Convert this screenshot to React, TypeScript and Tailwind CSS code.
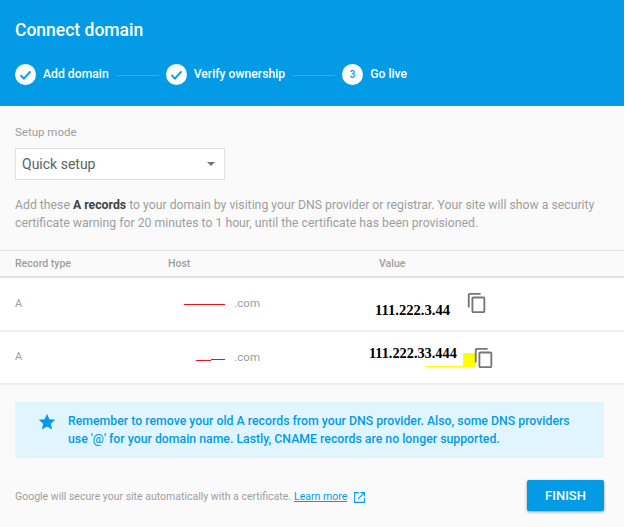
const font = "font-['Roboto',sans-serif]"

function CheckCircle() {
  return (
    <div className="w-[21px] h-[21px] rounded-full bg-white flex items-center justify-center shrink-0">
      <svg width="15" height="15" viewBox="0 0 24 24" fill="none" stroke="#039be5" strokeWidth="3">
        <path d="M4 13l5.5 5.5L20 7" />
      </svg>
    </div>
  )
}

function CopyIcon() {
  return (
    <svg width="22" height="22" viewBox="0 0 24 24" fill="#757575">
      <path d="M16 1H4c-1.1 0-2 .9-2 2v14h2V3h12V1zm3 4H8c-1.1 0-2 .9-2 2v14c0 1.100.9 2 2 2h11c1.100 0 2-.9 2-2V7c0-1.100-.9-2-2-2zm0 16H8V7h11v14z" />
    </svg>
  )
}

function Row({ redact, rowClass, children }: any) {
  return (
    <div className={`${rowClass} flex items-center border-b-2 border-[#eeeeee] text-[11px] text-[#9e9e9e]`}>
      <div className="w-[168px] pl-[15px] shrink-0">A</div>
      <div className="w-[195px] shrink-0 flex justify-end items-center pr-[103px] text-[11.5px]">
        {redact}
        <span className="ml-[9px]">.com</span>
      </div>
      {children}
    </div>
  )
}

export default function App() {
  return (
    <div className="w-[627px] h-[527px] overflow-hidden bg-white">
      <div className={`w-[624px] h-[527px] bg-[#fafafa] ${font}`}>
        {/* Header */}
        <div className="h-[106px] bg-[#039be5] text-white px-[15px] pt-[19px]">
          <h1 className="text-[17.5px] leading-[22px] font-medium">Connect domain</h1>
          <div className="flex items-center mt-[23px] text-[12.2px] font-medium">
            <CheckCircle />
            <span className="ml-[7px]">Add domain</span>
            <div className="w-[42px] h-px bg-white/20 ml-[8px] mr-[7px] mt-px" />
            <CheckCircle />
            <span className="ml-[7px]">Verify ownership</span>
            <div className="w-[42px] h-px bg-white/20 ml-[8px] mr-[7px] mt-px" />
            <div className="w-[21px] h-[21px] rounded-full bg-white text-[#039be5] flex items-center justify-center text-[10px] shrink-0">
              3
            </div>
            <span className="ml-[7px]">Go live</span>
          </div>
        </div>

        {/* Setup mode */}
        <div className="px-[15px] pt-[19px]">
          <div className="text-[11.5px] leading-[14px] text-[#9e9e9e]">Setup mode</div>
          <div className="mt-[9px] w-[210px] h-[32px] bg-white border border-[#e0e0e0] flex items-center justify-between pl-[6px] pr-[9px] text-[14px] text-[#616161]">
            <span>Quick setup</span>
            <div className="w-0 h-0 border-x-[4px] border-x-transparent border-t-[4px] border-t-[#757575]" />
          </div>
          <p className="mt-[16px] w-[594px] text-[12.25px] leading-[18px] text-[#9e9e9e]">
            Add these <b className="font-bold text-[#424242]">A records</b> to your domain by visiting your DNS provider or registrar. Your site will show a security certificate warning for 20 minutes to 1 hour, until the certificate has been provisioned.
          </p>
        </div>

        {/* Records table */}
        <div className="mt-[18px] border-t border-[#e0e0e0] bg-white">
          <div className="h-[27px] flex items-center border-b-2 border-[#e0e0e0] bg-[#fafafa] text-[10.5px] font-medium text-[#9e9e9e]">
            <div className="w-[168px] pl-[15px] shrink-0">Record type</div>
            <div className="w-[195px] shrink-0">Host</div>
            <div className="pl-[16px]">Value</div>
          </div>
          <Row rowClass="h-[54px]" redact={<div className="w-[41px] h-px bg-[#f01018]" />}>
            <div className="relative flex-1 h-full">
              <span className="absolute left-[12px] top-[24px] font-['Liberation_Serif',serif] font-bold text-[14.6px] leading-[16px] text-black">111.222.3.44</span>
              <div className="absolute left-[103px] top-[14px]"><CopyIcon /></div>
            </div>
          </Row>
          <Row
            rowClass="h-[53px]"
            redact={
              <div className="flex items-start mt-[5px]">
                <div className="w-[15px] h-px bg-[#f01018] mt-px" />
                <div className="w-[14px] h-px bg-[#f01018]" />
              </div>
            }
          >
            <div className="relative flex-1 h-full">
              <span className="absolute left-[6px] top-[13px] font-['Liberation_Serif',serif] font-bold text-[14.3px] leading-[16px] text-black">111.222.33.444</span>
              <div className="absolute left-[62px] top-[34px] w-[40px] h-px bg-[#ffff00]" />
              <div className="absolute left-[100px] top-[21px] w-[12px] h-[14px] bg-[#ffff00]" />
              <div className="absolute left-[110px] top-[15px]"><CopyIcon /></div>
            </div>
          </Row>
        </div>

        {/* Notice */}
        <div className="mx-[15px] w-[589px] mt-[17px] h-[56px] bg-[#e1f5fe] flex items-center pl-[22px] text-[12.3px] leading-[18px] font-medium text-[#039be5]">
          <svg width="20" height="20" viewBox="0 0 24 24" fill="#039be5" className="shrink-0 self-start mt-[10px]">
            <path d="M12 17.270L18.180 21l-1.640-7.030L22 9.240l-7.190-.61L12 2 9.190 8.630 2 9.240l5.460 4.730L5.820 21z" />
          </svg>
          <p className="ml-[11px] w-[510px]">
            Remember to remove your old A records from your DNS provider. Also, some DNS providers use '@' for your domain name. Lastly, CNAME records are no longer supported.
          </p>
        </div>

        {/* Footer */}
        <div className="mx-[15px] w-[589px] mt-[22px] flex items-center justify-between">
          <div className="flex items-center text-[10.5px] text-[#9e9e9e] mt-[3px]">
            <span>Google will secure your site automatically with a certificate.</span>
            <a className="ml-[3px] text-[#039be5] underline">Learn more</a>
            <svg width="13" height="13" viewBox="0 0 24 24" fill="#039be5" className="ml-[6px]">
              <path d="M20 20H4V4h7V2H2v20h20v-9h-2v7zM14 2v2h4.590L8.760 13.830l1.410 1.410L20 5.410V10h2V2h-8z" />
            </svg>
          </div>
          <button className="w-[77px] h-[31px] bg-[#039be5] text-white text-[13px] font-medium rounded-[2px] shadow-[0_1px_3px_rgba(0,0,0,0.4)]">
            FINISH
          </button>
        </div>
      </div>
    </div>
  )
}
